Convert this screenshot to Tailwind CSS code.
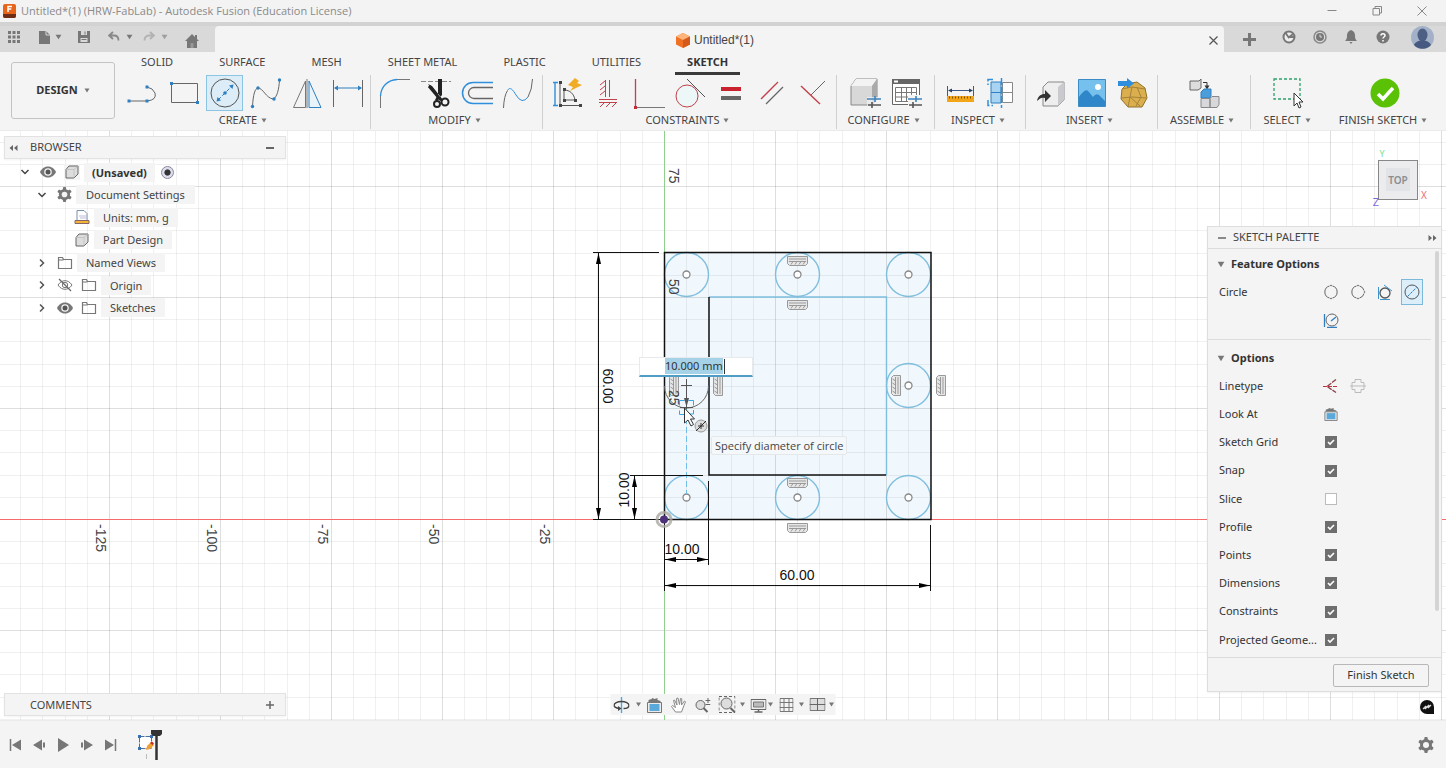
<!DOCTYPE html>
<html lang="en">
<head>
    <meta charset="UTF-8">
    <meta name="viewport" content="width=device-width, initial-scale=1.0">
    <title>Untitled*(1) - Autodesk Fusion</title>
    <script src="https://cdn.jsdelivr.net/npm/@tailwindcss/browser@4"></script>
</head>
<body class="flex h-screen flex-col overflow-hidden bg-[#f4f4f4] font-['Noto_Sans',sans-serif] text-[11px] text-[#444]">

    <!-- shared icons -->
    <svg class="hidden">
        <symbol id="caret" viewBox="0 0 6 5"><path d="M.5 .5h5L3 4.5z" fill="#777"/></symbol>
        <symbol id="down" viewBox="0 0 10 10"><path d="M1.500 3 5 6.500 8.500 3" fill="none" stroke="#444" stroke-width="1.500"/></symbol>
        <symbol id="right" viewBox="0 0 10 10"><path d="M3 1.500 6.500 5 3 8.500" fill="none" stroke="#555" stroke-width="1.500"/></symbol>
        <symbol id="eye" viewBox="0 0 16 16"><path d="M0 8c2-4 5-5.500 8-5.500S14 4 16 8c-2 4-5 5.500-8 5.500S2 12 0 8z" fill="#777"/><circle cx="8" cy="8" r="3.800" fill="#f4f4f4"/><circle cx="8" cy="8" r="2.500" fill="#555"/></symbol>
        <symbol id="eye-off" viewBox="0 0 16 16"><path d="M1 8c2-3 4.500-4.300 7-4.300s5 1.300 7 4.300c-2 3-4.500 4.300-7 4.300S3 11 1 8z" fill="none" stroke="#777"/><circle cx="8" cy="8" r="2.700" fill="none" stroke="#777"/><path d="m2 2 12 12" stroke="#666" stroke-width="1.200"/></symbol>
        <symbol id="folder" viewBox="0 0 16 14"><path d="M1.500 1.500h4l1 2h8v9h-13z M1.500 4h5" fill="none" stroke="#777" stroke-width="1.200"/></symbol>
        <symbol id="body" viewBox="0 0 16 16"><path d="M5 2h9v8l-4 4H2V5.500z" fill="#ddd" stroke="#666" stroke-linejoin="round"/><path d="M2.500 5.500H10v8M10 5.500 13.500 2.500" fill="none" stroke="#c4c4c4"/></symbol>
        <symbol id="gear" viewBox="0 0 16 16"><g fill="#777"><rect x="6.300" y="0" width="3.400" height="16" rx="1"/><rect x="6.300" y="0" width="3.400" height="16" rx="1" transform="rotate(60 8 8)"/><rect x="6.300" y="0" width="3.400" height="16" rx="1" transform="rotate(120 8 8)"/><circle cx="8" cy="8" r="6"/></g><circle cx="8" cy="8" r="3" fill="#f4f4f4"/></symbol>
        <symbol id="look" viewBox="0 0 16 16"><path d="M1 5.500h14v10H1z" fill="#ececec" stroke="#777"/><path d="M3 7h10v7H3z" fill="#5ba8da"/><path d="M2 5V3l3-1 1-1 2 1 3-1v2l3 1v1z" fill="#777"/></symbol>
        <symbol id="hv" viewBox="0 0 21 10"><path d="M.5.5h20v7l-2 2H2.500l-2-2z" fill="#e6e6e6" stroke="#999"/><path d="M2 3h17M2 5.500h17M4 8.500l2-3M8 8.500l2-3M12 8.500l2-3M16 8.500l2-3" stroke="#999"/></symbol>
        <symbol id="sliders" viewBox="0 0 14 12"><path d="M0 3h14M8 0v6" stroke="#3c84bd" stroke-width="1.600"/><path d="M1 9h13M5 6v6" stroke="#555" stroke-width="1.600"/></symbol>
    </svg>

    <!-- window title -->
    <header class="flex h-[22px] shrink-0 items-center bg-[#f3f3f3] pl-[3px] font-['Open_Sans',sans-serif] text-[#8a8a8a]">
        <svg class="h-[14px] w-[13px]" viewBox="0 0 13 14"><rect width="13" height="14" rx="2" fill="#e8641b"/><path d="M0 10h13v2a2 2 0 0 1-2 2H2a2 2 0 0 1-2-2z" fill="#6d2c13"/><path d="M5 8V2.500h4M5 5h3.300" stroke="#fff" stroke-width="1.500" fill="none"/></svg>
        <h1 class="ml-[5px] flex-1 text-[11px]">Untitled*(1) (HRW-FabLab) - Autodesk Fusion (Education License)</h1>
        <div class="flex gap-[33px] pr-[18px]">
            <button aria-label="Minimize"><svg class="h-3 w-3" viewBox="0 0 12 12"><path d="M1.500 5.500h9" stroke="#888"/></svg></button>
            <button aria-label="Restore"><svg class="h-3 w-3" viewBox="0 0 12 12"><path d="M2 3.500h6.500V10H2zM4 3.500v-2h6.500V8h-2" stroke="#888" fill="none"/></svg></button>
            <button aria-label="Close"><svg class="h-3 w-3" viewBox="0 0 12 12"><path d="m1.500 1.500 9 9m0-9-9 9" stroke="#888"/></svg></button>
        </div>
    </header>

    <!-- quick access + document tab -->
    <div class="flex h-[30px] shrink-0 border-t-4 border-[#d2d2d2] bg-[#d9d9d9]">
        <div class="flex w-[215px] shrink-0 items-center pl-2 pb-1">
            <button aria-label="Data panel"><svg class="h-3 w-3" viewBox="0 0 12 12" fill="#777"><path d="M0 0h3v3H0zM4.500 0h3v3h-3zM9 0h3v3H9zM0 4.500h3v3H0zM4.500 4.500h3v3h-3zM9 4.500h3v3H9zM0 9h3v3H0zM4.500 9h3v3h-3zM9 9h3v3H9z"/></svg></button>
            <button class="ml-[19px] flex items-center gap-1" aria-label="File"><svg class="h-[14px] w-3" viewBox="0 0 12 14"><path d="M0 1h7l4 4v9H0z" fill="#777"/><path d="M7 1v4h4" stroke="#d9d9d9" fill="none"/></svg><svg class="h-[6px] w-[7px]"><use href="#caret"/></svg></button>
            <button class="ml-4" aria-label="Save"><svg class="h-3 w-3" viewBox="0 0 12 12"><path d="M0 0h12v12H0z" fill="#777"/><path d="M3 0h6v4H3zM2.500 7h7v4h-7z" fill="#d9d9d9"/><path d="M7 .5v3M3.500 8.500h5" stroke="#777"/></svg></button>
            <button class="ml-[18px] flex items-center gap-[6px]" aria-label="Undo"><svg class="h-3 w-3" viewBox="0 0 12 12"><path d="M5 1 1 4.500 5 8M1.500 4.500H6c3 0 4.500 2 4.500 5" fill="none" stroke="#888" stroke-width="1.800"/></svg><svg class="h-[6px] w-[7px]"><use href="#caret"/></svg></button>
            <button class="ml-[10px] flex items-center gap-[6px] opacity-60" aria-label="Redo"><svg class="h-3 w-3" viewBox="0 0 12 12"><path d="m7 1 4 3.500L7 8M10.500 4.500H6c-3 0-4.500 2-4.500 5" fill="none" stroke="#999" stroke-width="1.800"/></svg><svg class="h-[6px] w-[7px]"><use href="#caret"/></svg></button>
            <button class="ml-[17px] pt-2" aria-label="Home"><svg class="h-[14px] w-[14px]" viewBox="0 0 14 14"><path d="M7 0 0 7h2v7h10V7h2l-2-2V1h-2v2z" fill="#777"/><path d="M5.500 9h3v5h-3z" fill="#999"/></svg></button>
        </div>
        <div class="flex flex-1 items-center rounded-t-sm bg-[#f4f4f4] pt-[2px] pr-1">
            <div class="ml-2 flex flex-1 items-center justify-center gap-1 font-['Liberation_Sans',sans-serif] text-[12px]">
                <svg class="h-[15px] w-[14px]" viewBox="0 0 14 15"><path d="m7 0 7 3.500v8L7 15l-7-3.500v-8z" fill="#ee7126"/><path d="m7 0 7 3.500L7 7 0 3.500z" fill="#ffb57a"/><path d="M7 7v8l7-3.500v-8z" fill="#d4591a"/></svg>
                Untitled*(1)
            </div>
            <button aria-label="Close tab" class="px-[2px]"><svg class="h-[9px] w-[9px]" viewBox="0 0 9 9"><path d="m.5.5 8 8m0-8-8 8" stroke="#555" stroke-width="1.200"/></svg></button>
        </div>
        <div class="flex w-[222px] shrink-0 items-center pl-[19px] pb-1">
            <button aria-label="New tab" class="pt-1"><svg class="h-[13px] w-[13px]" viewBox="0 0 13 13"><path d="M6.500 0v13M0 6.500h13" stroke="#777" stroke-width="3"/></svg></button>
            <button class="ml-[26px]" aria-label="Extensions"><svg class="h-[14px] w-[14px]" viewBox="0 0 14 14"><circle cx="7" cy="7" r="5.500" fill="#eee" stroke="#777" stroke-width="2"/><path d="M7 8 3 2M6 8l5-4M7 7h5" stroke="#777" stroke-width="1.800"/></svg></button>
            <button class="ml-[17px]" aria-label="Job status"><svg class="h-[14px] w-[14px]" viewBox="0 0 14 14"><circle cx="7" cy="7" r="6" fill="none" stroke="#888" stroke-width="1.500"/><circle cx="7" cy="7" r="4" fill="#777"/><path d="M7 4.500V7h2" stroke="#ddd" fill="none"/></svg></button>
            <button class="ml-[17px]" aria-label="Notifications"><svg class="h-[14px] w-[14px]" viewBox="0 0 14 14"><path d="M7 0c3 1 4 3 4 5.500 0 3 .5 4 2 5.500H1c1.500-1.500 2-2.500 2-5.500C3 3 4 1 7 0zM5.500 12h3L7 14z" fill="#777"/></svg></button>
            <button class="ml-[18px]" aria-label="Help"><svg class="h-[14px] w-[14px]" viewBox="0 0 14 14"><circle cx="7" cy="7" r="6.500" fill="#777"/><path d="M5 5.500C5 3 9 3 9 5.500 9 7 7 7 7 8.500M7 10v1.500" stroke="#fff" stroke-width="1.500" fill="none"/></svg></button>
            <button class="ml-[21px] pt-[1px]" aria-label="Account"><svg class="h-[23px] w-[23px]" viewBox="0 0 23 23"><circle cx="11.500" cy="11.500" r="11.500" fill="#a3b1c8"/><ellipse cx="11.500" cy="9" rx="5" ry="6.500" fill="#4d5f83"/><path d="M3 19c1-3 5-4 6-4.500h5c1 .5 5 1.500 6 4.500a11.500 11.500 0 0 1-17 0z" fill="#465980"/></svg></button>
        </div>
    </div>

    <!-- ribbon -->
    <div class="flex shrink-0 border-b border-[#eaeaea] pb-px">
        <div class="shrink-0 pt-[10px] pl-[11px]">
            <button class="flex h-[57px] w-[104px] items-center justify-center gap-[6px] rounded-[3px] border border-[#c4c4c4] text-[11px] font-bold text-[#333]">DESIGN <svg class="h-[5px] w-[6px]"><use href="#caret"/></svg></button>
        </div>
        <div class="flex min-w-0 flex-1 flex-col pl-[5px]">
            <nav class="flex h-[23px] gap-[22px] pl-[9px]">
                <button class="px-3 pb-[2px]">SOLID</button>
                <button class="px-3 pb-[2px]">SURFACE</button>
                <button class="px-3 pb-[2px]">MESH</button>
                <button class="px-3 pb-[2px]">SHEET METAL</button>
                <button class="px-3 pb-[2px]">PLASTIC</button>
                <button class="px-3 pb-[2px]">UTILITIES</button>
                <button class="border-b-3 border-[#3a3a3a] px-3 font-bold text-[#333]">SKETCH</button>
            </nav>
            <div class="flex [&_.tools]:flex [&_.tools]:h-9 [&_.tools]:gap-1 [&_.tools>button]:flex [&_.tools>button]:w-[37px] [&_.tools>button]:items-center [&_.tools>button]:justify-center [&_section]:flex [&_section]:h-[54px] [&_section]:shrink-0 [&_section]:flex-col [&_section]:items-center [&_section]:border-[#d0d0d0] [&_.menu]:flex [&_.menu]:h-[18px] [&_.menu]:items-center [&_.menu]:gap-1 [&_.menu]:pr-1 [&_.menu]:whitespace-nowrap">
                <section class="w-[251px] border-r">
                    <div class="tools">
                        <button aria-label="Line"><svg class="h-8 w-8" viewBox="0 0 32 32"><path d="M2 24h18q10-1 8-8-2-5-8-6" fill="none" stroke="#666"/><path d="M.5 22.500h3v3h-3zM18.500 22.500h3v3h-3zM18.500 8.500h3v3h-3z" fill="#2f7fc1"/></svg></button>
                        <button aria-label="Rectangle"><svg class="h-8 w-8" viewBox="0 0 32 32"><path d="M3.500 6.500h26v19h-26z" fill="none" stroke="#666"/><path d="M2 5h3v3H2zM28 24h3v3h-3z" fill="#2f7fc1"/></svg></button>
                        <button aria-label="Circle" class="border border-[#8cc4e4] bg-[#dcedf7]"><svg class="h-8 w-8" viewBox="0 0 32 32"><circle cx="16" cy="16" r="14" fill="none" stroke="#555"/><path d="m9 23 15-15" stroke="#2f7fc1" stroke-dasharray="4 2"/><path d="m7.500 24.500 1-4.500 3.500 3.500zM24.500 7.500l-4.500 1 3.500 3.500z" fill="#2f7fc1"/><circle cx="16" cy="16" r="1.800" fill="#2f7fc1"/></svg></button>
                        <button aria-label="Spline"><svg class="h-8 w-8" viewBox="0 0 32 32"><path d="M2.500 30C3 18 5 11 8 11c5 0 8 10 15 11 4-1 6-10 6.500-19" fill="none" stroke="#666"/><g fill="#2f7fc1"><circle cx="2.500" cy="29.500" r="1.700"/><circle cx="8" cy="11" r="1.700"/><circle cx="24" cy="22" r="1.700"/><circle cx="29.500" cy="3" r="1.700"/></g></svg></button>
                        <button aria-label="Mirror"><svg class="h-8 w-8" viewBox="0 0 32 32"><path d="M14.500 4v26.500h-12zM16 2v29" fill="none" stroke="#777"/><path d="M18 4v26.500h12z" fill="#e8f3fa" stroke="#2f7fc1"/></svg></button>
                        <button aria-label="Dimension"><svg class="h-8 w-8" viewBox="0 0 32 32"><path d="M1.500 3v27M30.500 3v27" stroke="#666"/><path d="M3 11h26" stroke="#2f7fc1"/><path d="m2 11 4-2.500v5zM30 11l-4-2.500v5z" fill="#2f7fc1"/></svg></button>
                    </div>
                    <button class="menu">CREATE <svg class="h-[5px] w-[6px]"><use href="#caret"/></svg></button>
                </section>
                <section class="w-[172px] border-r">
                    <div class="tools">
                        <button aria-label="Fillet"><svg class="h-8 w-8" viewBox="0 0 32 32"><path d="M1.500 31V19M18 2.500h13" stroke="#777"/><path d="M1.500 19C2 9 9 3 18 2.500" fill="none" stroke="#2f8fdc" stroke-width="1.400"/></svg></button>
                        <button aria-label="Trim"><svg class="h-8 w-8" viewBox="0 0 32 32"><path d="M1 4.500h30" stroke="#888" stroke-dasharray="5 2"/><path d="M8 7 20 24l3-1-11-14zM18 2h4v16l-5 6-2-1 3-6z" fill="#222"/><path d="m9 9 11 13" stroke="#222" stroke-width="3"/><g fill="none" stroke="#222" stroke-width="2"><circle cx="17" cy="27" r="3"/><circle cx="25" cy="25" r="3.500"/></g></svg></button>
                        <button aria-label="Offset"><svg class="h-8 w-8" viewBox="0 0 32 32"><path d="M32 5.500H12a10.500 10.500 0 0 0 0 21h20" fill="none" stroke="#2f8fdc" stroke-width="1.500"/><path d="M32 10.500H13a5.500 5.500 0 0 0 0 11h19" fill="none" stroke="#666" stroke-width="1.300"/></svg></button>
                        <button aria-label="Extend"><svg class="h-8 w-8" viewBox="0 0 32 32"><path d="M1.500 31Q2 19 5.500 13.500M26 20q4-7 4.500-18" fill="none" stroke="#666"/><path d="M5.500 13.500C8 9 11 13 14 18q6 10 12 2" fill="none" stroke="#2f8fdc"/></svg></button>
                    </div>
                    <button class="menu">MODIFY <svg class="h-[5px] w-[6px]"><use href="#caret"/></svg></button>
                </section>
                <section class="w-[294px] border-r">
                    <div class="tools">
                        <button aria-label="Auto constrain"><svg class="h-8 w-8" viewBox="0 0 32 32"><path d="M4 5v23M2 5.500h5M2 28.500h5" stroke="#2f8fdc" stroke-width="1.400"/><path d="M9 5v23.500h20M13 13v10h11M13 13c6 0 10 4 11 10" fill="none" stroke="#555"/><path d="M8 4h3v3H8zM28 27h3v3h-3zM8 27h3v3H8zM12 11h3v3h-3zM12 22h3v3h-3zM23 22h3v3h-3z" fill="#444"/><path d="m24 1 4 3-2 2 5 2-12 6 3-4-5-2z" fill="#f1ac23"/></svg></button>
                        <button aria-label="Horizontal/Vertical"><svg class="h-8 w-8" viewBox="0 0 32 32"><path d="M13.500 3v17M17.500 3v17M7 22.500h18M7 25.500h18M8 8l5-4M8 13l5-4M8 18l5-4M8 30l4-4M14 30l4-4M20 30l4-4" stroke="#c2414a"/></svg></button>
                        <button aria-label="Perpendicular"><svg class="h-8 w-8" viewBox="0 0 32 32"><path d="M2.500 2v28" stroke="#c2414a" stroke-width="1.300"/><path d="M3 30.500h29" stroke="#777"/><path d="M1 29h3v3H1z" fill="#c22c38"/></svg></button>
                        <button aria-label="Tangent"><svg class="h-8 w-8" viewBox="0 0 32 32"><circle cx="13" cy="19" r="11" fill="#eef7f7" stroke="#c2414a"/><path d="m13 2 18 18" stroke="#555"/></svg></button>
                        <button aria-label="Equal"><svg class="h-8 w-8" viewBox="0 0 32 32"><path d="M6 10h20v4H6z" fill="#c8232f"/><path d="M6 19h20v4H6z" fill="#666"/></svg></button>
                        <button aria-label="Parallel"><svg class="h-8 w-8" viewBox="0 0 32 32"><path d="M5 22 22 5" stroke="#c2414a" stroke-width="1.300"/><path d="M10 27 27 10" stroke="#666" stroke-width="1.300"/></svg></button>
                        <button aria-label="Coincident"><svg class="h-8 w-8" viewBox="0 0 32 32"><path d="m4 9 19 18" stroke="#c2414a" stroke-width="1.400"/><path d="M14 18 28 4" stroke="#666"/></svg></button>
                    </div>
                    <button class="menu">CONSTRAINTS <svg class="h-[5px] w-[6px]"><use href="#caret"/></svg></button>
                </section>
                <section class="w-[98px] border-r">
                    <div class="tools">
                        <button aria-label="Configure body"><svg class="h-8 w-8" viewBox="0 0 32 32"><path d="m2 9 5-7h21v20l-5 6H2z" fill="#d8d8d8" stroke="#888"/><path d="m2 9 5-7h21l-5 7z" fill="#f3f3f3"/><path d="m23 9 5-7v20l-5 6z" fill="#aaa"/><path d="M18 20h14v11H18z" fill="#f4f4f4" fill-opacity=".7"/><use href="#sliders" x="18" y="19" width="14" height="12"/></svg></button>
                        <button aria-label="Configuration table"><svg class="h-8 w-8" viewBox="0 0 32 32"><path d="M2.500 2.500h27v25h-27z" fill="#fff" stroke="#666"/><path d="M2 2h28v5H2z" fill="#666"/><path d="M4 3.500h4v2H4z" fill="#fff"/><path d="M5.500 10.500h21v14h-21zM5.500 15.500h21M5.500 20h21M11.500 10.500v14M16.500 10.500v14M21.500 10.500v14" fill="none" stroke="#777"/><path d="M18 18h14v13H18z" fill="#f4f4f4"/><use href="#sliders" x="18" y="19" width="14" height="12"/></svg></button>
                    </div>
                    <button class="menu">CONFIGURE <svg class="h-[5px] w-[6px]"><use href="#caret"/></svg></button>
                </section>
                <section class="w-[91px] border-r">
                    <div class="tools">
                        <button aria-label="Measure"><svg class="h-8 w-8" viewBox="0 0 32 32"><path d="M3.500 9v10M29.500 9v10M5 13.500h23" stroke="#3b5a85"/><path d="m4 13.500 4-2v4zM29 13.500l-4-2v4z" fill="#23436d"/><path d="M3 19h27v6H3z" fill="#f2a516"/><path d="M5 20.500h24" stroke="#7a5200" stroke-dasharray="1 2" stroke-width="2"/></svg></button>
                        <button aria-label="Interference"><svg class="h-8 w-8" viewBox="0 0 32 32"><path d="M17.500 5.500h10v20h-10zM17 15.500h10" fill="#fff" stroke="#888"/><path d="M6 5h10v21H6z" fill="#a8d4f2" stroke="#2f7fc1"/><path d="M6 15.500h10" stroke="#2f7fc1"/><path d="M8 2.500H3V8M3 23v5.500h5M16.500 1v30" fill="none" stroke="#2f8fdc" stroke-width="1.500" stroke-dasharray="7 2"/></svg></button>
                    </div>
                    <button class="menu">INSPECT <svg class="h-[5px] w-[6px]"><use href="#caret"/></svg></button>
                </section>
                <section class="w-[132px] border-r">
                    <div class="tools">
                        <button aria-label="Insert derive"><svg class="h-8 w-8" viewBox="0 0 32 32"><path d="m8 10 5-5h16v18l-6 6H8z" fill="#eee" stroke="#888"/><path d="m23 10 6-5v18l-6 6z" fill="#c9c9ce"/><path d="M2 24c1-6 5-7 8-7v-4l6 6-6 6v-4c-3-1-5 0-8 3z" fill="#333"/></svg></button>
                        <button aria-label="Insert image"><svg class="h-8 w-8" viewBox="0 0 32 32"><path d="M2.500 2.500h27v27h-27z" fill="#75c0ec" stroke="#3b8cc6"/><path d="M3 20c4-5 7-9 10-5l4 5c3-4 5-3 7-1l5 5v5H3z" fill="#2f86c8"/><circle cx="22" cy="10" r="3" fill="#fff"/></svg></button>
                        <button aria-label="Insert mesh"><svg class="h-8 w-8" viewBox="0 0 32 32"><path d="m10 7 10-2 8 6 2 10-5 9H11l-7-8 1-10z" fill="#dcaf4e" stroke="#8f702b"/><path d="m5 12 10-2 13 2M4 21l11-1 14 1M15 10l-2 10-2 10M20 10l4 10-5 9M13 20l10 9" fill="none" stroke="#a5833a"/><path d="M1 4h9V1l7 5.500-7 5V9H1z" fill="#2f8fdc"/></svg></button>
                    </div>
                    <button class="menu">INSERT <svg class="h-[5px] w-[6px]"><use href="#caret"/></svg></button>
                </section>
                <section class="w-[93px] border-r">
                    <div class="tools">
                        <button aria-label="New component"><svg class="h-8 w-8" viewBox="0 0 32 32"><path d="M2 4h9l2-2v9l-3 2H2z" fill="#ddd" stroke="#666"/><path d="M15 5.500h4v5" fill="none" stroke="#333"/><path d="m16.500 8.500 2.500 4 2.500-4z" fill="#333"/><path d="m13 15 3-3h7v7l-1 2h-9z" fill="#4c9edb" stroke="#2f7fc1"/><path d="M13 21.500h9v9h-9zM22 21.500l2-2h7v8l-2 3h-7z" fill="#d8d8dc" stroke="#888"/></svg></button>
                    </div>
                    <button class="menu">ASSEMBLE <svg class="h-[5px] w-[6px]"><use href="#caret"/></svg></button>
                </section>
                <section class="w-[76px]">
                    <div class="tools">
                        <button aria-label="Select"><svg class="h-8 w-8" viewBox="0 0 32 32"><path d="M1 2h26v20H1z" fill="none" stroke="#30a06c" stroke-dasharray="3 2" stroke-width="1.300"/><path d="M21 16v13l3-3 2 5 2-1-2-5h4z" fill="#fff" stroke="#333"/></svg></button>
                    </div>
                    <button class="menu">SELECT <svg class="h-[5px] w-[6px]"><use href="#caret"/></svg></button>
                </section>
                <section class="w-[116px]">
                    <div class="tools">
                        <button aria-label="Finish sketch"><svg class="h-8 w-8" viewBox="0 0 32 32"><circle cx="16" cy="16" r="14.500" fill="#5bc107"/><path d="m9 17 5 5 10-11" fill="none" stroke="#fff" stroke-width="3.500"/></svg></button>
                    </div>
                    <button class="menu">FINISH SKETCH <svg class="h-[5px] w-[6px]"><use href="#caret"/></svg></button>
                </section>
            </div>
        </div>
    </div>

    <!-- sketch canvas -->
    <main class="relative min-h-0 flex-1 overflow-hidden bg-white">
        <svg class="absolute inset-0 h-full w-full" viewBox="0 131 1446 589" preserveAspectRatio="xMidYMid slice">
            <defs>
                <pattern id="grid" x="664" y="519" width="111" height="111" patternUnits="userSpaceOnUse">
                    <path d="M22.500 0v111M44.500 0v111M67.500 0v111M89.500 0v111M0 22.500h111M0 44.500h111M0 67.500h111M0 89.500h111" stroke="#000" stroke-opacity=".06"/>
                    <path d="M.5 0v111M0 .5h111" stroke="#000" stroke-opacity=".13"/>
                </pattern>
                <marker id="arrow" viewBox="0 0 11 6" refX="11" refY="3" markerWidth="11" markerHeight="6" orient="auto-start-reverse" markerUnits="userSpaceOnUse"><path d="M0 .5 11 3 0 5.500z"/></marker>
            </defs>
            <path d="M664 252h267v268H664z" fill="#f0f8fd"/>
            <path d="M0 131h1446v589H0z" fill="url(#grid)"/>
            <rect x="0" y="519" width="1446" height="1" fill="#f56b6b"/>
            <rect x="664" y="131" width="1" height="589" fill="#8fd08f"/>

            <!-- profile circles -->
            <g fill="none" stroke="#80bede" stroke-width="1.400">
                <circle cx="686.500" cy="274.500" r="22"/><circle cx="797.500" cy="274.500" r="22"/><circle cx="908.500" cy="274.500" r="22"/>
                <circle cx="908.500" cy="385.500" r="22"/>
                <circle cx="686.500" cy="497.500" r="22"/><circle cx="797.500" cy="497.500" r="22"/><circle cx="908.500" cy="497.500" r="22"/>
                <path d="M709 297h177.500v178"/>
            </g>
            <g fill="#fff" stroke="#888" stroke-width="1.300">
                <circle cx="686.500" cy="274.500" r="3.500"/><circle cx="797.500" cy="274.500" r="3.500"/><circle cx="908.500" cy="274.500" r="3.500"/>
                <circle cx="908.500" cy="385.500" r="3.500"/>
                <circle cx="686.500" cy="497.500" r="3.500"/><circle cx="797.500" cy="497.500" r="3.500"/><circle cx="908.500" cy="497.500" r="3.500"/>
            </g>
            <path d="M664.500 519.500V252.500H931V519.500zM709 297v178h177" fill="none" stroke="#111" stroke-width="1.500"/>

            <!-- circle being drawn -->
            <path d="M664.500 386a22 22 0 0 0 44 0" fill="none" stroke="#666"/>
            <path d="M686.500 400v94" stroke="#6fbfea" stroke-dasharray="6 3"/>

            <!-- dimensions -->
            <g stroke="#111" fill="none">
                <path d="M593 252.500h66M593 519.500h71M630 475.500h73M708.500 481v84M664.500 520v71M930.500 525v66"/>
                <g marker-start="url(#arrow)" marker-end="url(#arrow)">
                    <path d="M598.500 253v266"/><path d="M634.500 476v43"/><path d="M665 559.500h43"/><path d="M665 585.500h265"/>
                </g>
            </g>
            <g font-family="Liberation Sans, sans-serif" font-size="14" fill="#111" text-anchor="middle">
                <text transform="translate(603 386) rotate(90)">60.00</text>
                <text transform="translate(629 490) rotate(-90)">10.00</text>
                <text x="682" y="554">10.00</text>
                <text x="797" y="580">60.00</text>
            </g>

            <!-- constraint glyphs -->
            <use href="#hv" x="787" y="256" width="21" height="10"/>
            <use href="#hv" x="787" y="300" width="21" height="10"/>
            <use href="#hv" x="787" y="478" width="21" height="10"/>
            <use href="#hv" x="787" y="523" width="21" height="10"/>
            <g transform="rotate(90)">
                <use href="#hv" x="375" y="-679" width="21" height="10"/>
                <use href="#hv" x="375" y="-723" width="21" height="10"/>
                <use href="#hv" x="375" y="-901" width="21" height="10"/>
                <use href="#hv" x="375" y="-946" width="21" height="10"/>
            </g>

            <!-- ruler labels -->
            <g font-family="Liberation Sans, sans-serif" font-size="14" fill="#444">
                <text transform="translate(669 168) rotate(90)">75</text>
                <text transform="translate(669 279) rotate(90)">50</text>
                <text transform="translate(669 390) rotate(90)">25</text>
                <text transform="translate(96 524) rotate(90)">-125</text>
                <text transform="translate(207 524) rotate(90)">-100</text>
                <text transform="translate(318 524) rotate(90)">-75</text>
                <text transform="translate(429 524) rotate(90)">-50</text>
                <text transform="translate(540 524) rotate(90)">-25</text>
            </g>

            <!-- origin -->
            <circle cx="664" cy="519.500" r="7" fill="none" stroke="#aaa9a2" stroke-opacity=".8" stroke-width="3"/>
            <circle cx="664" cy="519.500" r="4" fill="#4d3179"/>

            <!-- cursor -->
            <path d="M686.500 379v30M681 385.500h11M680 407.500h13" stroke="#555"/>
            <path d="M679.500 400.500h5M688.500 400.500h5v5M693.500 410v4h-5M684.500 414.500h-5v-4M679.500 405.500v-5" fill="none" stroke="#35a6e4"/>
            <path d="m684 398 2.500 9 2.500-9z" fill="#555"/>
            <path d="M684.500 408v15l3.500-3 3 6 2.500-1.500-3-5.500h4z" fill="#fff" stroke="#333"/>
            <circle cx="701" cy="426" r="6" fill="#ddd" stroke="#999"/>
            <path d="m696 431 10-10M701 423v6M698 426h6" stroke="#333"/>

            <!-- view cube -->
            <rect x="1378.500" y="160.500" width="39" height="39" fill="#ececee" stroke="#888"/>
            <rect x="1386" y="168" width="24" height="23" fill="#e2e3e6"/>
            <g font-family="Noto Sans, sans-serif" text-anchor="middle">
                <text x="1398" y="184" font-size="10" font-weight="600" fill="#8a8d92">TOP</text>
                <text x="1382" y="157" font-size="9" fill="#7de08d">Y</text>
                <text x="1424" y="199" font-size="10" fill="#ef6b77">X</text>
                <text x="1376" y="206" font-size="11" fill="#7a68e0">Z</text>
            </g>
        </svg>

        <!-- live dimension input -->
        <div class="absolute top-[226px] left-[639px] h-[20px] w-[114px] border border-b-2 border-[#e6eaec] border-b-[#4f9cc5] bg-white">
            <input id="diameter" aria-label="Diameter" value="10.000 mm" class="block h-4 w-full px-[25px] text-[11px] text-[#333] outline-none selection:bg-[#a6d2e8] selection:text-[#333]">
            <span class="absolute top-[1px] right-[27px] h-[15px] w-px bg-[#333]"></span>
        </div>
        <div class="absolute top-[305px] left-[711px] rounded-xs border border-[#e4e8ea] bg-[#f4f8fa] px-[3px] font-['Open_Sans',sans-serif] text-[11px] leading-[17px] whitespace-nowrap">Specify diameter of circle</div>

        <!-- browser tree -->
        <aside class="absolute top-[5px] left-1 w-[282px]">
            <div class="flex h-[23px] items-center border border-[#e2e2e2] bg-[#f4f4f4] pr-[11px] pl-1 shadow-xs">
                <button aria-label="Collapse"><svg class="h-2 w-[9px]" viewBox="0 0 9 8"><path d="M4 1 .5 4 4 7zM8.500 1 5 4l3.500 3z" fill="#666"/></svg></button>
                <h2 class="ml-3 flex-1">BROWSER</h2>
                <button aria-label="Minimize browser"><svg class="h-2 w-2" viewBox="0 0 8 8"><path d="M0 4h8" stroke="#666" stroke-width="2"/></svg></button>
            </div>
            <ul class="mt-[2px] grid h-[158px] grid-rows-7 text-[11px] [&>li]:flex [&>li]:items-center [&_span]:bg-[#f4f4f4] [&_span]:leading-[19px]">
                <li class="pl-4"><svg class="h-[10px] w-[10px]"><use href="#down"/></svg><svg class="ml-[10px] h-4 w-4"><use href="#eye"/></svg><svg class="ml-2 h-4 w-4 bg-[#f4f4f4]"><use href="#body"/></svg><span class="ml-1 bg-[#ececec] px-2 font-bold text-[#333]">(Unsaved)</span><input type="radio" checked aria-label="Activate component" class="ml-[6px] h-[13px] w-[13px] appearance-none rounded-full border border-[#889] bg-[radial-gradient(#333_35%,#dde_45%)]"></li>
                <li class="pl-[33px]"><svg class="h-[10px] w-[10px]"><use href="#down"/></svg><svg class="ml-[10px] h-[15px] w-[15px]"><use href="#gear"/></svg><span class="ml-1 px-[10px]">Document Settings</span></li>
                <li class="pl-[70px]"><svg class="h-4 w-4" viewBox="0 0 16 16"><path d="M3 1.500h7l3 3v7H3z" fill="#fff" stroke="#7b8fae"/><path d="M6 9h6M5 7h7" stroke="#bbd"/><path d="M1 11.500h14v3H1z" fill="#f2b53c" stroke="#866"/></svg><span class="ml-1 px-[9px]">Units: mm, g</span></li>
                <li class="pl-[70px]"><svg class="h-4 w-4"><use href="#body"/></svg><span class="ml-1 px-[9px]">Part Design</span></li>
                <li class="pl-[33px]"><svg class="h-[10px] w-[10px]"><use href="#right"/></svg><svg class="ml-[10px] h-[14px] w-4"><use href="#folder"/></svg><span class="ml-1 px-[9px]">Named Views</span></li>
                <li class="pl-[33px]"><svg class="h-[10px] w-[10px]"><use href="#right"/></svg><svg class="ml-[10px] h-4 w-4"><use href="#eye-off"/></svg><svg class="ml-2 h-[14px] w-4"><use href="#folder"/></svg><span class="ml-1 px-[9px]">Origin</span></li>
                <li class="pl-[33px]"><svg class="h-[10px] w-[10px]"><use href="#right"/></svg><svg class="ml-[10px] h-4 w-4"><use href="#eye"/></svg><svg class="ml-2 h-[14px] w-4"><use href="#folder"/></svg><span class="ml-1 px-[9px]">Sketches</span></li>
            </ul>
        </aside>

        <div class="absolute bottom-1 left-1 flex h-[23px] w-[282px] items-center border border-[#e2e2e2] bg-[#f4f4f4] pt-px pr-[11px] pl-[25px] shadow-xs">
            <h2 class="flex-1">COMMENTS</h2>
            <button aria-label="Add comment"><svg class="h-2 w-2" viewBox="0 0 8 8"><path d="M0 4h8M4 0v8" stroke="#666" stroke-width="1.500"/></svg></button>
        </div>

        <!-- navigation bar -->
        <div class="absolute bottom-[5px] left-1/2 flex h-[21px] w-[225px] -translate-x-1/2 items-center bg-[#f4f4f4] pl-[3px]">
            <button class="flex items-center gap-[6px]" aria-label="Orbit"><svg class="h-4 w-4" viewBox="0 0 16 16"><path d="M8 0v16" stroke="#4fa8dc" stroke-width="1.400"/><path d="M10 11.500c3 0 5.500-1.300 5.500-3.300S12 4.500 8 4.500.500 6.200.500 8.200 3 11 6 11.500" fill="none" stroke="#444" stroke-width="1.500"/><path d="M4.500 9 8 11.500 4.500 14z" fill="#444"/></svg><svg class="h-[5px] w-[6px]"><use href="#caret"/></svg></button>
            <button class="ml-[5px]" aria-label="Look at"><svg class="h-4 w-4"><use href="#look"/></svg></button>
            <button class="ml-2" aria-label="Pan"><svg class="h-4 w-4" viewBox="0 0 16 16"><path d="M5 15 1 9.500l1-1 3 2-2-7 1-.5 2.500 5L6 1.500 7.500 1 9 7.500l1-6 1.300.3L11 8l3-4 1 .7L12.500 11 11 15z" fill="#fff" stroke="#888"/></svg></button>
            <button class="ml-2" aria-label="Zoom"><svg class="h-4 w-4" viewBox="0 0 16 16"><circle cx="6" cy="8" r="4.500" fill="#ddd" stroke="#666"/><path d="m9 11 4 4" stroke="#666" stroke-width="2"/><path d="M11 3.500h5M13.500 1v5M11 7.500h5" stroke="#666"/></svg></button>
            <button class="ml-2 flex items-center gap-1" aria-label="Zoom window"><svg class="h-[17px] w-[17px]" viewBox="0 0 17 17"><path d="M.5.5h16v16H.5z" fill="none" stroke="#666" stroke-dasharray="3 2"/><circle cx="8" cy="7.500" r="5.500" fill="#ddd" stroke="#666"/><path d="m12 12 4 4" stroke="#666" stroke-width="2"/></svg><svg class="h-[5px] w-[6px]"><use href="#caret"/></svg></button>
            <button class="ml-[5px] flex items-center gap-px" aria-label="Display settings"><svg class="h-4 w-4" viewBox="0 0 16 16"><path d="M.5 2.500h15v10H.5z" fill="#eee" stroke="#666"/><path d="M3 5h10v5H3z" fill="#bbb" stroke="#777"/><path d="M4 15h8M8 12v3" stroke="#666" stroke-width="1.500"/></svg><svg class="h-[5px] w-[6px]"><use href="#caret"/></svg></button>
            <button class="ml-[6px] flex items-center gap-[5px]" aria-label="Grid and snaps"><svg class="h-[14px] w-[14px]" viewBox="0 0 14 14"><path d="M.5.5h13v13H.5zM4.500 0v14M9.500 0v14M0 4.500h14M0 9.500h14" fill="none" stroke="#777"/></svg><svg class="h-[5px] w-[6px]"><use href="#caret"/></svg></button>
            <button class="ml-[5px] flex items-center gap-[3px]" aria-label="Viewports"><svg class="h-[13px] w-4" viewBox="0 0 16 13"><path d="M.5.5h15v12H.5z" fill="#ddd" stroke="#777"/><path d="M8 0v13M0 6.500h16" stroke="#666"/></svg><svg class="h-[5px] w-[6px]"><use href="#caret"/></svg></button>
        </div>

        <!-- sketch palette -->
        <aside class="absolute top-[95px] right-1 w-[235px] border border-[#dedede] bg-[#f4f4f4] text-[11px] text-[#333] shadow-xs">
            <div class="flex h-[22px] items-center border-b border-[#dcdcdc] pr-1 pl-[10px]">
                <button aria-label="Minimize palette"><svg class="h-2 w-2" viewBox="0 0 8 8"><path d="M0 4h8" stroke="#666" stroke-width="1.500"/></svg></button>
                <h2 class="ml-[7px] flex-1 text-[#444]">SKETCH PALETTE</h2>
                <button aria-label="Expand"><svg class="h-2 w-[9px]" viewBox="0 0 9 8"><path d="M.5 1 4 4 .5 7zM5 1l3.500 3L5 7z" fill="#666"/></svg></button>
            </div>
            <div class="flex">
                <div class="min-w-0 flex-1">
                    <h3 class="flex h-[30px] items-center gap-[6px] pl-[9px] font-bold"><svg class="h-[7px] w-2"><use href="#caret"/></svg>Feature Options</h3>
                    <div class="flex border-b border-[#dcdcdc] pb-[6px] pl-[11px]">
                        <span class="w-[101px] leading-[26px]">Circle</span>
                        <div class="grid grid-cols-4 gap-x-[5px] gap-y-[2px] [&>button]:flex [&>button]:h-[26px] [&>button]:w-[22px] [&>button]:items-center [&>button]:justify-center">
                            <button aria-label="Center diameter"><svg class="h-4 w-4" viewBox="0 0 16 16"><path d="M6.500 2a6.200 6.200 0 0 0 0 12M9.500 2a6.200 6.200 0 0 1 0 12" fill="none" stroke="#666"/><circle cx="8" cy="1.500" r=".8" fill="#555"/><circle cx="8" cy="14.500" r=".8" fill="#555"/></svg></button>
                            <button aria-label="2-point"><svg class="h-4 w-4" viewBox="0 0 16 16"><path d="M6.500 2a6.200 6.200 0 0 0 0 12M9.500 2a6.200 6.200 0 0 1 4.500 4.500M14 9.500A6.200 6.200 0 0 1 9.500 14" fill="none" stroke="#666"/><circle cx="8" cy="1.500" r=".8" fill="#555"/><circle cx="14.500" cy="8" r=".8" fill="#555"/><circle cx="8" cy="14.500" r=".8" fill="#555"/></svg></button>
                            <button aria-label="3-point"><svg class="h-4 w-4" viewBox="0 0 16 16"><circle cx="8" cy="9" r="5" fill="none" stroke="#555" stroke-width="1.300"/><path d="M1.500 3v12M3 15.500h10M7 1l8 6" stroke="#3c94cc"/></svg></button>
                            <button aria-label="2-tangent" class="border border-[#7bb8da] bg-[#dceefa]"><svg class="h-4 w-4" viewBox="0 0 16 16"><circle cx="8" cy="8" r="7" fill="none" stroke="#555"/><path d="m3.500 12.500 9-9" stroke="#2f7fc1" stroke-dasharray="3 1"/></svg></button>
                            <button aria-label="3-tangent"><svg class="h-4 w-4" viewBox="0 0 16 16"><circle cx="9" cy="8" r="6" fill="none" stroke="#666"/><path d="M1.500 2v13M4 15.500h10M8 9l5-4" stroke="#2f7fc1" stroke-width="1.300"/></svg></button>
                        </div>
                    </div>
                    <h3 class="flex h-8 items-center gap-[6px] pt-1 pl-[9px] font-bold"><svg class="h-[7px] w-2"><use href="#caret"/></svg>Options</h3>
                    <div class="grid h-[282px] grid-rows-10 pl-[11px] [&>*]:flex [&>*]:items-center [&_span]:w-[106px] [&_span]:whitespace-nowrap [&_input]:h-3 [&_input]:w-3 [&_input]:appearance-none [&_input]:border [&_input]:border-[#bbb] [&_input]:bg-white [&_input:checked]:border-[#6e6e6e] [&_input:checked]:bg-[#6e6e6e] [&_label]:relative [&_label>svg]:pointer-events-none [&_label>svg]:absolute [&_label>svg]:left-[106px] [&_label>svg]:h-3 [&_label>svg]:w-3">
                        <div><span>Linetype</span><button class="-ml-[2px]" aria-label="Construction"><svg class="h-4 w-4" viewBox="0 0 16 16"><path d="M0 8.500h15" stroke="#c2323e" stroke-dasharray="4 1"/><path d="M13 1.500 4 8.500l9 6" fill="none" stroke="#8a4048" stroke-dasharray="5 1" stroke-width="1.300"/></svg></button><button class="ml-[11px]" aria-label="Centerline"><svg class="h-4 w-4" viewBox="0 0 16 16"><path d="M5 1.500h6v3h3v7h-3v3H5v-3H2v-7h3zM0 8h16" fill="none" stroke="#bbb"/></svg></button></div>
                        <div><span>Look At</span><button class="-ml-px" aria-label="Look at"><svg class="h-[14px] w-[14px]"><use href="#look"/></svg></button></div>
                        <label><span>Sketch Grid</span><input type="checkbox" checked><svg viewBox="0 0 12 12"><path d="m3 6 2 2 4-4" fill="none" stroke="#fff" stroke-width="1.600"/></svg></label>
                        <label><span>Snap</span><input type="checkbox" checked><svg viewBox="0 0 12 12"><path d="m3 6 2 2 4-4" fill="none" stroke="#fff" stroke-width="1.600"/></svg></label>
                        <label><span>Slice</span><input type="checkbox"></label>
                        <label><span>Profile</span><input type="checkbox" checked><svg viewBox="0 0 12 12"><path d="m3 6 2 2 4-4" fill="none" stroke="#fff" stroke-width="1.600"/></svg></label>
                        <label><span>Points</span><input type="checkbox" checked><svg viewBox="0 0 12 12"><path d="m3 6 2 2 4-4" fill="none" stroke="#fff" stroke-width="1.600"/></svg></label>
                        <label><span>Dimensions</span><input type="checkbox" checked><svg viewBox="0 0 12 12"><path d="m3 6 2 2 4-4" fill="none" stroke="#fff" stroke-width="1.600"/></svg></label>
                        <label><span>Constraints</span><input type="checkbox" checked><svg viewBox="0 0 12 12"><path d="m3 6 2 2 4-4" fill="none" stroke="#fff" stroke-width="1.600"/></svg></label>
                        <label><span>Projected Geome...</span><input type="checkbox" checked><svg viewBox="0 0 12 12"><path d="m3 6 2 2 4-4" fill="none" stroke="#fff" stroke-width="1.600"/></svg></label>
                    </div>
                </div>
                <div class="mt-[2px] mr-[2px] ml-1 h-[360px] w-1 rounded-full bg-[#d4d4d4]"></div>
            </div>
            <div class="mt-[3px] flex h-[34px] items-center justify-end border-t border-[#dcdcdc] pt-px pr-3">
                <button class="h-[23px] w-24 rounded-xs border border-[#b8b8b8]">Finish Sketch</button>
            </div>
        </aside>

        <button class="absolute right-3 bottom-[6px]" aria-label="Assistant"><svg class="h-[14px] w-[14px]" viewBox="0 0 14 14"><path d="M7 0a7 7 0 0 1 7 7v7H7A7 7 0 0 1 7 0z" fill="#111"/><path d="m3 9 3-3-1 3 4-4-1 3 3-3" fill="none" stroke="#ddd" stroke-width="1.200"/></svg></button>
    </main>

    <!-- timeline -->
    <footer class="flex h-12 shrink-0 items-center border-t border-[#ececec] pr-3 pl-2">
        <div class="flex gap-[10px]">
            <button aria-label="First"><svg class="h-[14px] w-[14px]" viewBox="0 0 14 14"><path d="M2.500 1v12" stroke="#777" stroke-width="1.500"/><path d="M13 1.500v11L4 7z" fill="#777"/></svg></button>
            <button aria-label="Previous"><svg class="h-[14px] w-[14px]" viewBox="0 0 14 14"><path d="M10 1.500v11L1 7zM11 4.500h2v5h-2z" fill="#777"/></svg></button>
            <button aria-label="Play"><svg class="h-[14px] w-[14px]" viewBox="0 0 14 14"><path d="M2 0v14l11-7z" fill="#777"/></svg></button>
            <button aria-label="Next"><svg class="h-[14px] w-[14px]" viewBox="0 0 14 14"><path d="M4 1.500v11L13 7zM1 4.500h2v5H1z" fill="#777"/></svg></button>
            <button aria-label="Last"><svg class="h-[14px] w-[14px]" viewBox="0 0 14 14"><path d="M11.500 1v12" stroke="#777" stroke-width="1.500"/><path d="M1 1.500v11L10 7z" fill="#777"/></svg></button>
        </div>
        <button class="ml-[19px]" aria-label="Sketch1"><svg class="h-[31px] w-[26px]" viewBox="0 0 26 31"><path d="M2.500 7.500h12v12h-12z" fill="#fff" stroke="#4a6fa5" stroke-dasharray="5 1"/><path d="M1 6h3v3H1zM1 18h3v3H1zM13 6h3v3h-3z" fill="#3a6fb0"/><path d="m9 21 1-4 4-4 3 3-4 4z" fill="#f0a030"/><path d="m13 14 2-1.500 2 2-1.500 1.500z" fill="#c03030"/><path d="M9.500 25v5" stroke="#bbb"/><path d="M14 1h11v4l-2 2h-7l-2-2z" fill="#333"/><path d="M19.500 6v25" stroke="#333" stroke-width="2.500"/></svg></button>
        <button class="ml-auto" aria-label="Settings"><svg class="h-4 w-4"><use href="#gear"/></svg></button>
    </footer>

    <script>
        const diameter = document.getElementById('diameter');
        diameter.focus();
        diameter.select();
    </script>
</body>
</html>
